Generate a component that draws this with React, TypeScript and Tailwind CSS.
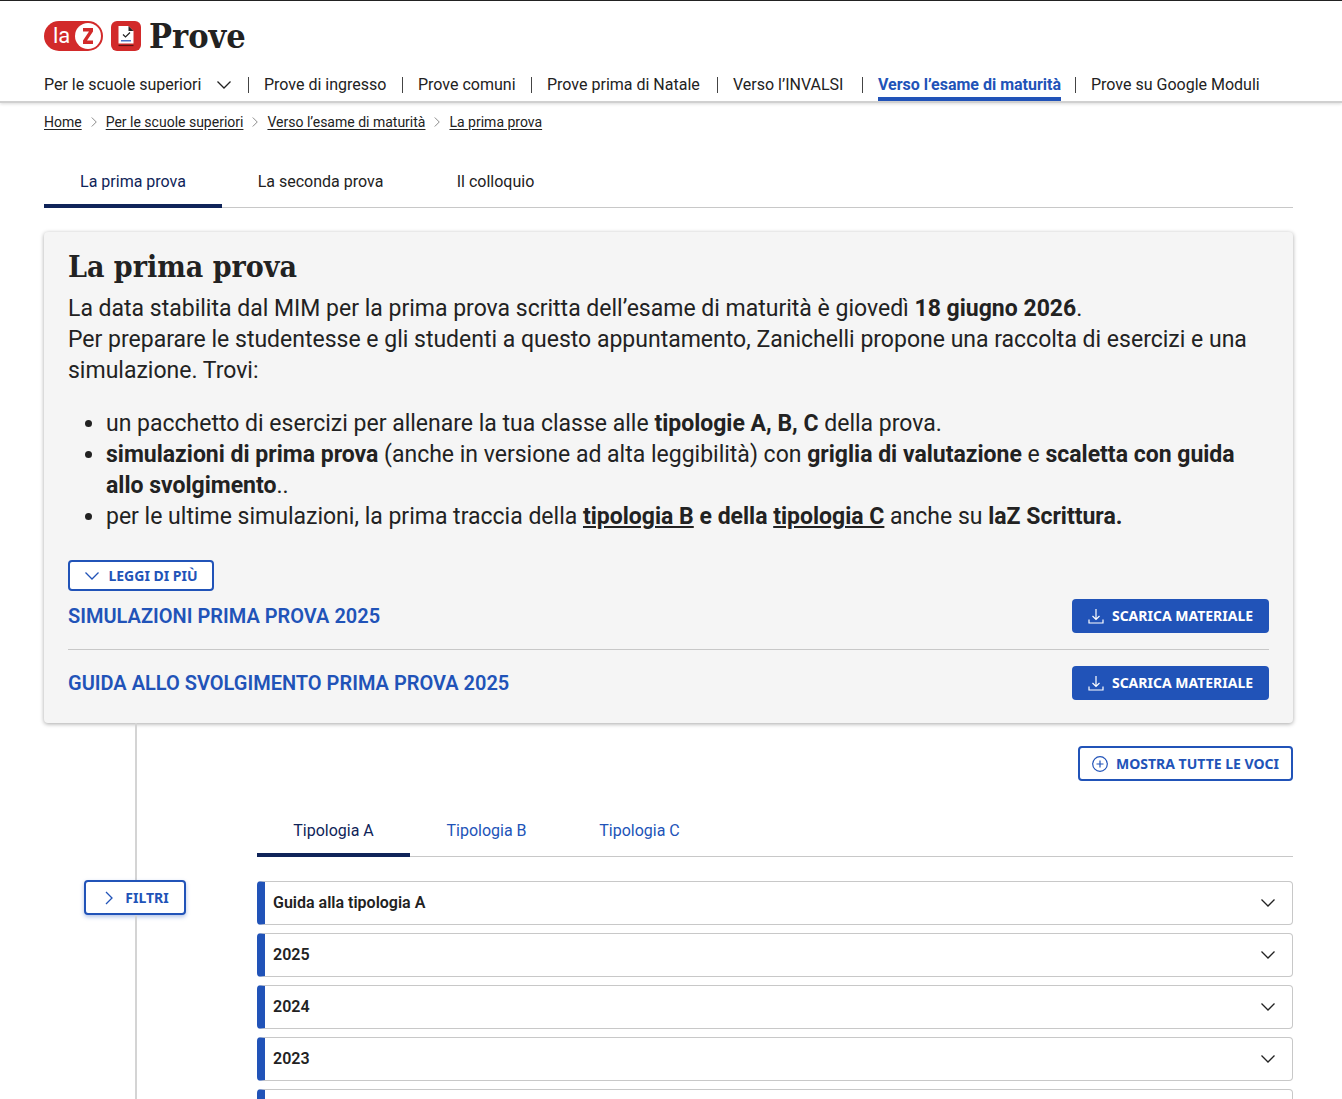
import { useState } from "react";
import type { ReactNode } from "react";

const navItems = [
  { label: "Prove di ingresso", width: "w-[154px]" },
  { label: "Prove comuni", width: "w-[129px]" },
  { label: "Prove prima di Natale", width: "w-[186px]" },
  { label: "Verso l’INVALSI", width: "w-[145px]" },
  { label: "Verso l’esame di maturità", width: "w-[213px]", active: true },
  { label: "Prove su Google Moduli", width: "w-[178px]" },
];

const breadcrumb = ["Home", "Per le scuole superiori", "Verso l’esame di maturità", "La prima prova"];

const pageTabs = [
  { label: "La prima prova", width: "w-[178px]" },
  { label: "La seconda prova", width: "w-[197px]" },
  { label: "Il colloquio", width: "w-[153px]" },
];

const materials = ["Simulazioni prima prova 2025", "Guida allo svolgimento prima prova 2025"];

const typeTabs = ["Tipologia A", "Tipologia B", "Tipologia C"];

const sections = ["Guida alla tipologia A", "2025", "2024", "2023"];

function Chevron({ className = "", right = false }: { className?: string; right?: boolean }) {
  return (
    <svg viewBox="0 0 16 16" className={`h-4 w-4 shrink-0 fill-none stroke-current ${className}`} aria-hidden="true">
      <path d={right ? "M5 2l6 6-6 6" : "M1.5 4.5L8 11 14.5 4.5"} strokeWidth="1.3" />
    </svg>
  );
}

function DownloadIcon() {
  return (
    <svg viewBox="0 0 16 16" className="h-4 w-4 shrink-0 fill-none stroke-current" aria-hidden="true">
      <path d="M8 1v10.5M4.500 8L8 11.5 11.500 8M1 11.500v3.500h14v-3.500" strokeWidth="1.2" />
    </svg>
  );
}

function PlusCircleIcon() {
  return (
    <svg viewBox="0 0 16 16" className="h-4 w-4 shrink-0 fill-none stroke-current" aria-hidden="true">
      <circle cx="8" cy="8" r="7.3" strokeWidth="1.2" />
      <path d="M8 4.5v7M4.5 8h7" strokeWidth="1.2" />
    </svg>
  );
}

function Logo() {
  return (
    <a href="#" className="flex items-center">
      <span className="flex h-[30px] w-[59px] items-center justify-between rounded-full bg-[#d22a2a] pr-[2px] pl-[9px] text-white">
        <span className="text-[22px] leading-none">la</span>
        <span className="flex h-[26px] w-[26px] items-center justify-center rounded-full bg-white">
          <svg viewBox="0 0 12 18" className="h-[18px] w-3" aria-hidden="true">
            <path d="M1 1h10v3.500L5 13.600h6V17H1v-3.500L7 4.400H1z" fill="#d22a2a" />
          </svg>
        </span>
      </span>
      <svg viewBox="0 0 30 30" className="ml-2 h-[30px] w-[30px]" aria-hidden="true">
        <rect width="30" height="30" rx="6" fill="#d22a2a" />
        <path d="M7.500 5h10l5 5v12.500h-15z" fill="#fff" />
        <path d="M17.500 5l5 5h-5z" fill="#222" />
        <path d="M12 13.500l2.500 2.500 4.500-4.500" fill="none" stroke="#222" strokeWidth="1.200" />
        <path d="M10 19.800h10" stroke="#2153b8" strokeWidth="1.200" />
        <path d="M7.500 24.500h15" stroke="#5a1414" strokeWidth="1.200" />
      </svg>
      <span className="ml-2 font-['DejaVu_Serif_Condensed','DejaVu_Serif',serif] text-[34px] leading-10 font-bold">Prove</span>
    </a>
  );
}

function OutlineButton({ children, className = "", onClick }: { children: ReactNode; className?: string; onClick?: () => void }) {
  return (
    <button
      type="button"
      onClick={onClick}
      className={`flex items-center justify-center gap-2 rounded-[4px] border-2 border-[#2153b8] bg-white font-['Noto_Sans',sans-serif] text-[14px] leading-4 font-bold text-[#2153b8] uppercase ${className}`}
    >
      {children}
    </button>
  );
}

export default function App() {
  const [pageTab, setPageTab] = useState(0);
  const [typeTab, setTypeTab] = useState(0);

  return (
    <div className="h-screen overflow-hidden bg-white font-[Roboto,sans-serif] text-[#222]">
      <header className="border-t border-b-2 border-t-[#222] border-b-[#d0d0d0] pt-[15px] shadow-[0_1px_3px_rgba(0,0,0,0.15)]">
        <div className="px-11">
          <Logo />
          <nav className="mt-[13px] flex h-8 items-start text-[16px] leading-8 whitespace-nowrap">
            <button type="button" className="flex w-[204px] items-center justify-between pr-4 text-left">
              Per le scuole superiori
              <Chevron />
            </button>
            {navItems.map((item) => (
              <div key={item.label} className={`flex items-center ${item.width}`}>
                <span className="h-4 w-px shrink-0 bg-[#444]" />
                <a
                  href="#"
                  className={item.active ? "ml-[15px] h-8 border-b-4 border-[#2153b8] font-bold text-[#2153b8]" : "ml-[15px]"}
                >
                  {item.label}
                </a>
              </div>
            ))}
          </nav>
        </div>
      </header>

      <div className="pr-[49px] pl-11">
        <nav className="flex items-center pt-[9px] text-[14px] leading-5">
          {breadcrumb.map((crumb, i) => (
            <span key={crumb} className="flex items-center">
              {i > 0 && <Chevron right className="mx-1 scale-75 text-[#888]" />}
              <a href="#" className="underline underline-offset-2">{crumb}</a>
            </span>
          ))}
        </nav>

        <div role="tablist" className="mt-6 flex border-b border-[#c8c8c8] text-[16px]">
          {pageTabs.map((tab, i) => (
            <button
              key={tab.label}
              type="button"
              role="tab"
              aria-selected={pageTab === i}
              onClick={() => setPageTab(i)}
              className={`-mb-px h-[52px] border-b-4 pt-1 ${tab.width} ${pageTab === i ? "border-[#0f2459] text-[#0f2459]" : "border-transparent"}`}
            >
              {tab.label}
            </button>
          ))}
        </div>

        <section className="mt-6 rounded-[4px] bg-[#f5f5f5] px-6 pt-4 pb-[23px] shadow-[0_1px_4px_rgba(0,0,0,0.35)]">
          <h1 className="font-['DejaVu_Serif_Condensed','DejaVu_Serif',serif] text-[30px] leading-[38px] font-bold">La prima prova</h1>
          <div className="mt-[7px] text-[23px] leading-[31px]">
            <p>
              La data stabilita dal MIM per la prima prova scritta dell’esame di maturità è giovedì <b>18 giugno 2026</b>.
              <br />
              Per preparare le studentesse e gli studenti a questo appuntamento, Zanichelli propone una raccolta di esercizi e una
              simulazione. Trovi:
            </p>
            <ul className="mt-[22px] list-disc pl-[38px]">
              <li>
                un pacchetto di esercizi per allenare la tua classe alle <b>tipologie A, B, C</b> della prova.
              </li>
              <li>
                <b>simulazioni di prima prova</b> (anche in versione ad alta leggibilità) con <b>griglia di valutazione</b> e{" "}
                <b>scaletta con guida allo svolgimento</b>..
              </li>
              <li>
                per le ultime simulazioni, la prima traccia della{" "}
                <b>
                  <a href="#" className="underline">tipologia B</a> e della <a href="#" className="underline">tipologia C</a>
                </b>{" "}
                anche su <b>laZ Scrittura.</b>
              </li>
            </ul>
          </div>
          <OutlineButton className="mt-7 h-[31px] w-[146px]">
            <Chevron />
            Leggi di più
          </OutlineButton>
          <div className="mt-2 divide-y divide-[#c8c8c8]">
            {materials.map((title, i) => (
              <div key={title} className={`flex items-center justify-between ${i === 0 ? "pb-4" : "pt-4"}`}>
                <h2 className="text-[20px] leading-6 font-semibold text-[#2153b8] uppercase">{title}</h2>
                <button
                  type="button"
                  className="flex h-[34px] w-[197px] items-center justify-center gap-2 rounded-[4px] bg-[#2153b8] font-['Noto_Sans',sans-serif] text-[14px] leading-4 font-bold text-white uppercase"
                >
                  <DownloadIcon />
                  Scarica materiale
                </button>
              </div>
            ))}
          </div>
        </section>

        <div className="flex">
          <aside className="flex w-[213px] shrink-0 flex-col">
            <span className="ml-[91px] h-[157px] w-0.5 bg-[#d4d4d4]" />
            <OutlineButton className="ml-10 h-[35px] w-[102px] shadow-[0_2px_4px_rgba(33,83,184,0.35)]">
              <Chevron right />
              Filtri
            </OutlineButton>
            <span className="ml-[91px] w-0.5 flex-1 bg-[#d4d4d4]" />
          </aside>
          <main className="min-w-0 flex-1">
            <div className="flex justify-end pt-[23px]">
              <OutlineButton className="h-[35px] w-[215px]">
                <PlusCircleIcon />
                Mostra tutte le voci
              </OutlineButton>
            </div>
            <div role="tablist" className="mt-6 flex border-b border-[#c8c8c8] text-[16px]">
              {typeTabs.map((label, i) => (
                <button
                  key={label}
                  type="button"
                  role="tab"
                  aria-selected={typeTab === i}
                  onClick={() => setTypeTab(i)}
                  className={`-mb-px h-[52px] w-[153px] border-b-4 pt-1 ${typeTab === i ? "border-[#0f2459] text-[#0f2459]" : "border-transparent text-[#2153b8]"}`}
                >
                  {label}
                </button>
              ))}
            </div>
            <div className="mt-6 flex flex-col gap-2">
              {sections.map((title) => (
                <button
                  key={title}
                  type="button"
                  className="flex h-11 items-center justify-between rounded-[4px] border border-l-8 border-[#c8c8c8] border-l-[#2153b8] pr-4 pl-2 text-left text-[16px] font-semibold"
                >
                  {title}
                  <Chevron />
                </button>
              ))}
              <div className="h-11 rounded-[4px] border border-l-8 border-[#c8c8c8] border-l-[#2153b8]" />
            </div>
          </main>
        </div>
      </div>
    </div>
  );
}
